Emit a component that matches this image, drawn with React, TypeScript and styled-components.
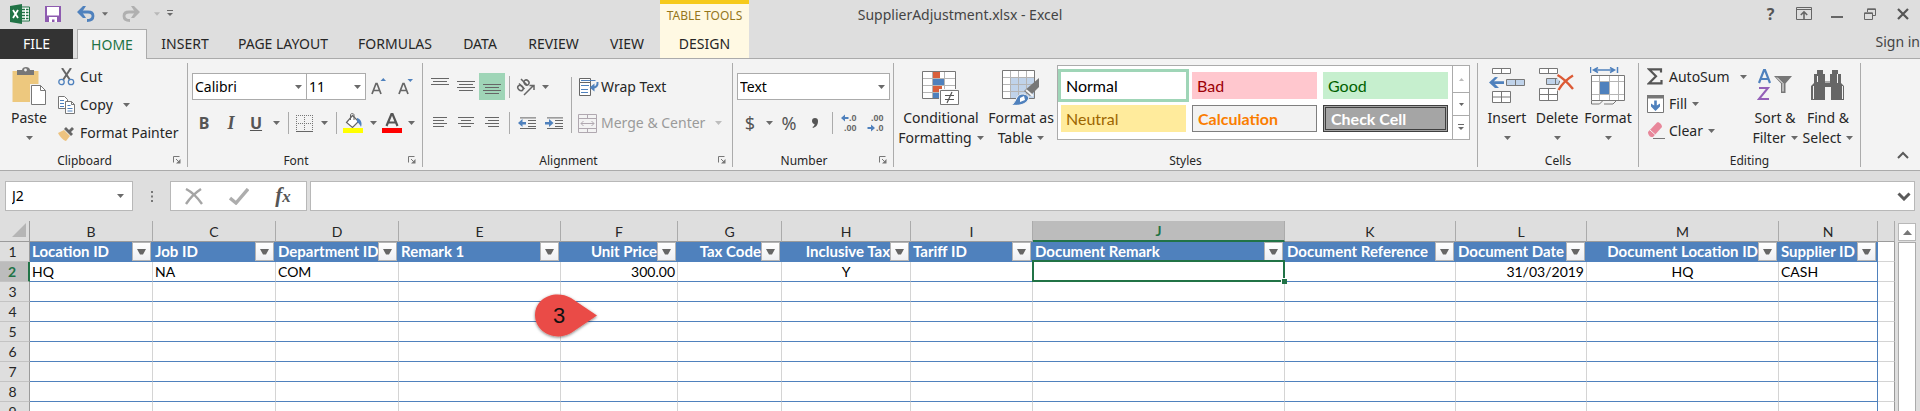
import React from "react";
import styled, { createGlobalStyle, css } from "styled-components";

const ui = `"Noto Sans", "Open Sans", sans-serif`;
const cellFont = `Lato, "Open Sans", sans-serif`;
const line = "#ababab";
const chrome = "#dedede";
const green = "#217346";
const blue = "#4f81bd";

const GlobalStyle = createGlobalStyle`
  *, *::before, *::after { box-sizing: border-box; }
  body { margin: 0; background: ${chrome}; overflow: hidden; }
  button, input, select { font: inherit; color: inherit; }
`;

const Page = styled.div`
  display: flex;
  flex-direction: column;
  height: 100vh;
  font: 14px/20px ${ui};
  color: #262626;
`;

const plain = css`
  border: 0;
  padding: 0;
  background: none;
  white-space: nowrap;
`;

/* Title bar */

const TitleBar = styled.header`
  display: grid;
  grid-template-columns: 1fr auto 1fr;
  height: 29px;
`;

const TitleStart = styled.div`
  display: flex;
`;

const QuickAccess = styled.div`
  display: flex;
  align-items: center;
  flex: 0 0 660px;
  padding: 0 0 3px 4px;
`;

const QuickButton = styled.button<{ $width: number }>`
  ${plain}
  display: flex;
  align-items: center;
  justify-content: center;
  width: ${(p) => p.$width}px;
  height: 24px;
`;

const ContextTitle = styled.div`
  flex: 0 0 89px;
  border-top: 4px solid #f6ca1a;
  background: #fff9e3;
  color: #94761b;
  font-size: 12px;
  line-height: 24px;
  text-align: center;
`;

const DocumentTitle = styled.h1`
  margin: 0;
  font-size: 14px;
  font-weight: 400;
  line-height: 30px;
  color: #444;
`;

const WindowControls = styled.div`
  display: flex;
  justify-content: flex-end;
  align-items: center;
  padding: 0 1px 3px 0;
`;

/* Tabs */

const TabStrip = styled.nav`
  display: flex;
  height: 30px;
  border-bottom: 1px solid ${line};
`;

const Tab = styled.button<{ $width: number; $kind?: "file" | "active" | "context" }>`
  ${plain}
  flex: 0 0 ${(p) => p.$width}px;
  height: 29px;
  line-height: 30px;
  ${(p) =>
    p.$kind === "file" &&
    css`
      height: 30px;
      margin-right: 4px;
      background: #333;
      color: #fff;
    `}
  ${(p) =>
    p.$kind === "active" &&
    css`
      height: 30px;
      border: 1px solid ${line};
      border-bottom: 0;
      background: #f3f3f3;
      color: ${green};
      line-height: 28px;
    `}
  ${(p) => p.$kind === "context" && css`background: #fff9e3;`}
`;

const SignIn = styled.a`
  margin-left: auto;
  color: #444;
  line-height: 26px;
  text-decoration: none;
`;

/* Ribbon */

const Ribbon = styled.section`
  display: flex;
  flex: none;
  padding: 4px 0 3px;
  border-bottom: 1px solid ${line};
  background: #f3f3f3;
`;

const GroupBox = styled.section<{ $width: number }>`
  flex: 0 0 ${(p) => p.$width}px;
  border-right: 1px solid ${line};
`;

const GroupBody = styled.div<{ $pad: number }>`
  display: flex;
  height: 90px;
  padding-left: ${(p) => p.$pad}px;
`;

const GroupFoot = styled.div`
  display: flex;
  height: 14px;
`;

const GroupName = styled.h2`
  flex: 1;
  margin: 0;
  font-size: 12px;
  font-weight: 400;
  line-height: 15px;
  text-align: center;
`;

const Launcher = styled.button`
  ${plain}
  display: flex;
  align-items: center;
  width: 18px;
  padding-left: 4px;
`;

const BigButton = styled.button<{ $width: number }>`
  ${plain}
  display: flex;
  flex-direction: column;
  align-items: center;
  width: ${(p) => p.$width}px;
  padding-top: 4px;
`;

const BigIcon = styled.span`
  height: 41px;
`;

const BigText = styled.span`
  display: flex;
  align-items: center;
  gap: 5px;
  height: 20px;
`;

const Stack = styled.div<{ $row: number; $pad: number; $width?: number }>`
  display: grid;
  grid-template-rows: repeat(3, ${(p) => p.$row}px);
  align-content: start;
  padding-left: ${(p) => p.$pad}px;
  ${(p) => p.$width && `width: ${p.$width}px;`}
`;

const SmallButton = styled.button<{ $iconWidth: number; $gap?: number; $muted?: boolean }>`
  ${plain}
  display: flex;
  align-items: center;
  gap: ${(p) => p.$gap ?? 5}px;
  color: ${(p) => (p.$muted ? "#9a9a9a" : "inherit")};
  & > span:first-child {
    display: flex;
    flex: 0 0 ${(p) => p.$iconWidth}px;
  }
  & > span:nth-child(2) {
    margin-left: -${(p) => p.$gap ?? 5}px;
  }
`;

const Rows = styled.div`
  display: grid;
  grid-template-rows: 27px 28px;
  align-content: start;
  gap: 9px;
  padding-top: 10px;
`;

const Row = styled.div<{ $pad?: number }>`
  display: flex;
  align-items: center;
  padding-left: ${(p) => p.$pad ?? 0}px;
`;

const Tool = styled.button<{ $width: number; $on?: boolean }>`
  ${plain}
  display: flex;
  align-items: center;
  justify-content: center;
  width: ${(p) => p.$width}px;
  height: 27px;
  background: ${(p) => (p.$on ? "#9fd5b7" : "none")};
`;

const Letter = styled.span<{ $look: "bold" | "italic" | "underline" | "symbol" }>`
  color: #555;
  font-size: 16px;
  font-weight: ${(p) => (p.$look === "symbol" ? 400 : 700)};
  ${(p) => p.$look === "italic" && `font-family: "Liberation Serif", serif; font-style: italic; font-size: 18px;`}
  ${(p) => p.$look === "underline" && `text-decoration: underline;`}
  ${(p) => p.$look === "symbol" && `font-size: 18px;`}
`;

const Divider = styled.span<{ $width?: number; $tall?: boolean }>`
  display: flex;
  flex: 0 0 ${(p) => p.$width ?? 8}px;
  justify-content: center;
  height: ${(p) => (p.$tall ? 56 : 22)}px;
  margin-top: ${(p) => (p.$tall ? 14 : 0)}px;
  &::before {
    content: "";
    width: 1px;
    background: ${line};
  }
`;

const SelectBox = styled.label<{ $width: number }>`
  display: grid;
  align-items: center;
  width: ${(p) => p.$width}px;
  & + & { margin-left: -1px; }
  & > * { grid-area: 1 / 1; }
  & > svg {
    justify-self: end;
    margin-right: 5px;
    pointer-events: none;
  }
`;

const Select = styled.select`
  appearance: none;
  width: 100%;
  height: 27px;
  padding: 0 2px;
  border: 1px solid ${line};
  border-radius: 0;
  background: #fff;
  color: #000;
`;

const AlignLeftBlock = styled.div`
  flex: 0 0 144px;
`;

/* Cell style gallery */

const Gallery = styled.div`
  display: flex;
  width: 413px;
  height: 75px;
  margin-top: 2px;
  border: 1px solid ${line};
  background: #fff;
`;

const Swatches = styled.div`
  display: grid;
  grid-template-columns: repeat(3, 125px);
  grid-auto-rows: 27px;
  gap: 6px;
  flex: 1;
  padding: 6px 3px;
`;

const Swatch = styled.button<{ $bg: string; $ink: string; $edge?: string; $bold?: boolean; $on?: boolean }>`
  ${plain}
  padding-left: 5px;
  border: ${(p) => p.$edge ?? "0"};
  background: ${(p) => p.$bg};
  box-shadow: ${(p) => (p.$on ? "0 0 0 3px #9fd5b7" : "none")};
  color: ${(p) => p.$ink};
  font: ${(p) => (p.$bold ? 700 : 400)} 16px/20px ${cellFont};
  text-align: left;
`;

const GalleryScroll = styled.div`
  display: grid;
  grid-template-rows: 26px 23px 24px;
  width: 17px;
  border-left: 1px solid ${line};
`;

const GalleryButton = styled.button`
  ${plain}
  display: flex;
  align-items: center;
  justify-content: center;
  & + & { border-top: 1px solid ${line}; }
`;

const RibbonTail = styled.div`
  display: flex;
  flex: 1;
  align-items: flex-end;
  justify-content: flex-end;
  padding: 0 10px 0 0;
`;

/* Formula bar */

const FormulaBar = styled.section`
  display: flex;
  flex: none;
  height: 50px;
  padding: 10px 5px 10px;
`;

const Field = styled.div<{ $width?: number }>`
  display: flex;
  align-items: center;
  flex: ${(p) => (p.$width ? `0 0 ${p.$width}px` : "1")};
  min-width: 0;
  height: 30px;
  border: 1px solid #b8b8b8;
  background: #fff;
`;

const FieldInput = styled.input`
  flex: 1;
  width: 0;
  min-width: 0;
  padding: 0 6px;
  border: 0;
  outline: 0;
  background: none;
  color: #000;
`;

const Grip = styled.span`
  display: flex;
  flex: 0 0 37px;
  align-items: center;
  justify-content: center;
`;

const FieldGap = styled.span`
  flex: 0 0 3px;
`;

/* Sheet */

const Sheet = styled.main`
  position: relative;
  display: flex;
  flex: 1;
  min-height: 0;
  overflow: hidden;
`;

const GridArea = styled.div`
  flex: 1;
  min-width: 0;
`;

const GridTable = styled.table`
  width: 100%;
  table-layout: fixed;
  border-collapse: separate;
  border-spacing: 0;
  color: #000;
  font: 14px/19px ${cellFont};
`;

const Corner = styled.td`
  height: 21px;
  padding: 0 3px 3px 0;
  border-right: 1px solid #9b9b9b;
  border-bottom: 1px solid #9b9b9b;
  & > svg { display: block; margin-left: auto; }
`;

const ColHead = styled.th<{ $on?: boolean }>`
  height: 21px;
  padding: 0;
  border-right: 1px solid ${line};
  border-bottom: ${(p) => (p.$on ? `2px solid ${green}` : "1px solid #9b9b9b")};
  background: ${(p) => (p.$on ? "#bcbcbc" : chrome)};
  color: ${(p) => (p.$on ? green : "#262626")};
  font-weight: ${(p) => (p.$on ? 700 : 400)};
`;

const RowHead = styled.th<{ $on?: boolean }>`
  height: 20px;
  padding: 0 4px 0 0;
  border-right: ${(p) => (p.$on ? `2px solid ${green}` : "1px solid #9b9b9b")};
  border-bottom: 1px solid #c3c3c3;
  background: ${(p) => (p.$on ? "#bcbcbc" : chrome)};
  color: ${(p) => (p.$on ? green : "#262626")};
  font-weight: ${(p) => (p.$on ? 700 : 400)};
`;

const FieldCell = styled.td`
  height: 20px;
  padding: 0;
  border-bottom: 1px solid ${blue};
  background: ${blue};
  color: #fff;
  font-size: 15px;
  font-weight: 700;
`;

const FieldContent = styled.div<{ $align: Align }>`
  display: flex;
  height: 19px;
  & > span {
    flex: 1;
    min-width: 0;
    padding-left: 2px;
    text-align: ${(p) => (p.$align === "left" ? "left" : "right")};
    white-space: nowrap;
  }
`;

const FilterButton = styled.button`
  ${plain}
  display: flex;
  flex: 0 0 19px;
  align-items: center;
  justify-content: center;
  height: 19px;
  margin-right: 2px;
  border: 1px solid #b4b4b4;
  background: linear-gradient(#fff, #eeeff2);
`;

const Cell = styled.td<{ $align: Align; $last?: boolean; $outside?: boolean }>`
  position: relative;
  height: 20px;
  padding: 0 2px;
  border-right: 1px solid ${(p) => (p.$outside ? "#9b9b9b" : p.$last ? blue : "#d4d4d4")};
  border-bottom: 1px solid ${(p) => (p.$outside ? "#d4d4d4" : blue)};
  background: #fff;
  text-align: ${(p) => p.$align};
  white-space: nowrap;
`;

const Selection = styled.span`
  position: absolute;
  z-index: 1;
  inset: -2px -1px -1px -1px;
  border: 2px solid ${green};
  &::after {
    content: "";
    position: absolute;
    right: -4px;
    bottom: -4px;
    width: 6px;
    height: 6px;
    border: solid #fff;
    border-width: 1px 0 0 1px;
    background: ${green};
  }
`;

const Callout = styled.svg`
  position: absolute;
  z-index: 2;
  top: 72px;
  left: 532px;
`;

const ScrollBar = styled.div`
  display: flex;
  flex-direction: column;
  flex: 0 0 25px;
  gap: 1px;
  padding: 2px 4px 0 3px;
`;

const ScrollButton = styled.button`
  ${plain}
  display: flex;
  align-items: center;
  justify-content: center;
  height: 18px;
  border: 1px solid #b8b8b8;
  background: #fff;
`;

const ScrollThumb = styled.div`
  flex: 1;
  border: 1px solid ${line};
  border-bottom: 0;
  background: #fff;
`;

/* Icons */

type IconProps = { w: number; h: number; children: React.ReactNode };
const Icon = ({ w, h, children }: IconProps) => (
  <svg width={w} height={h} viewBox={`0 0 ${w} ${h}`} fill="none" aria-hidden="true">
    {children}
  </svg>
);

const Caret = ({ color = "#6a6a6a" }: { color?: string }) => (
  <Icon w={7} h={4}>
    <path d="M0 0h7L3.500 4z" fill={color} />
  </Icon>
);

const ExcelLogo = () => (
  <Icon w={20} h={20}>
    <path d="M11 3h8.500v14H11z" fill="#fff" stroke="#217346" />
    <path d="M12 5.500h3M12 8.500h3M12 11.500h3M12 14.500h3M16 5.500h2.500M16 8.500h2.500M16 11.500h2.500M16 14.500h2.500" stroke="#217346" strokeWidth="1.600" />
    <path d="M0 2l12-2v20L0 18z" fill="#217346" />
    <path d="M3 6l5 8M8 6l-5 8" stroke="#fff" strokeWidth="1.800" />
  </Icon>
);

const SaveIcon = () => (
  <Icon w={16} h={16}>
    <path d="M0 0h16v16H0z" fill="#8e5bb0" />
    <path d="M2 1h12v8.500H2zM4 11h8v5H9.500v-2.500H7V16H4z" fill="#fff" />
  </Icon>
);

const UndoIcon = ({ color, flip }: { color: string; flip?: boolean }) => (
  <Icon w={18} h={16}>
    <g transform={flip ? "translate(18 0) scale(-1 1)" : undefined}>
      <path d="M2 6h9c3 0 5 1.500 5 4s-2 4.500-6 4.500" stroke={color} strokeWidth="2.800" />
      <path d="M0 6l6-6h3L5 6l4 6H6z" fill={color} />
    </g>
  </Icon>
);

const CustomizeIcon = () => (
  <Icon w={6} h={7}>
    <path d="M0 .5h6" stroke="#6a6a6a" />
    <path d="M0 3h6L3 6z" fill="#6a6a6a" />
  </Icon>
);

const PasteIcon = () => (
  <Icon w={36} h={39}>
    <path d="M1.500 4h26v31h-26z" fill="#edc87e" />
    <path d="M6 8V3h5c0-4 8-4 8 0h4v5z" fill="#777" />
    <circle cx="14.500" cy="3" r="1.400" fill="#f3f3f3" />
    <path d="M19 17h12l5 6v16H19z" fill="#f3f3f3" />
    <path d="M20.500 18.500h9l5 5v14h-14z" fill="#fff" stroke="#777" />
    <path d="M29.500 18.500v5h5" stroke="#777" />
  </Icon>
);

const CutIcon = () => (
  <Icon w={17} h={18}>
    <path d="M4 0l8 12M13 0L5 12" stroke="#666" strokeWidth="2" />
    <circle cx="3.500" cy="14" r="2.700" stroke={blue} strokeWidth="1.300" />
    <circle cx="13" cy="14" r="2.700" stroke={blue} strokeWidth="1.300" />
  </Icon>
);

const CopyIcon = () => (
  <Icon w={17} h={18}>
    <path d="M.5.5h6l3 3v9h-9z" fill="#fff" stroke="#777" />
    <path d="M2 4.500h4M2 7.500h4M2 10.500h4" stroke={blue} />
    <path d="M7.500 5.500h6l3 3v9h-9z" fill="#fff" stroke="#777" />
    <path d="M13.500 5.500v3h3" stroke="#777" />
    <path d="M9.500 9.500h3M9.500 12.500h5M9.500 15h5" stroke={blue} />
  </Icon>
);

const PainterIcon = () => (
  <Icon w={17} h={15}>
    <path d="M0 7l6-3 6 6-4 5c-2 0-6-4-8-8z" fill="#edc380" />
    <path d="M6 3l2-2 7 7-2 2z" fill="#666" />
    <path d="M10 5l4-4 2 2-4 4z" fill="#666" />
  </Icon>
);

const SizeIcon = ({ up }: { up?: boolean }) => (
  <Icon w={16} h={17}>
    <path d="M1 16l4-10.500h1L10 16M2.500 12.500h6" stroke="#666" strokeWidth="1.700" />
    <path d={up ? "M9.500 3h5.500L12.300 0z" : "M9.500 1h5.500L12.300 4z"} fill={blue} />
  </Icon>
);

const BorderIcon = () => (
  <Icon w={17} h={17}>
    <path d="M.5 0v16M8.500 0v16M16.500 0v16M0 .5h17M0 8.500h17" stroke="#777" strokeDasharray="1 1" />
    <path d="M0 16.500h17" stroke="#666" />
  </Icon>
);

const FillColorIcon = () => (
  <Icon w={20} h={20}>
    <path d="M3.500 9.500l6-7 6 6-6 6z" fill="#fff" stroke="#666" strokeWidth="1.200" />
    <path d="M7.500 7V2c0-2 3.500-2 3.500 0v5" stroke="#666" />
    <path d="M14 5c4 1 5.500 5 4 9-1-2-2-4-4-5z" fill={blue} />
    <path d="M0 15h20v5H0z" fill="#ff0" />
  </Icon>
);

const FontColorIcon = () => (
  <Icon w={20} h={20}>
    <path d="M4.500 13L9.500 1h1l5 12M6.500 9.500h7" stroke="#555" strokeWidth="2.200" />
    <path d="M0 15h20v5H0z" fill="red" />
  </Icon>
);

const Lines = ({ rows }: { rows: [number, number][] }) => (
  <Icon w={18} h={rows.length * 3 + 2}>
    {rows.map(([x, w], i) => (
      <path key={i} d={`M${x} ${i * 3 + 1.5}h${w}`} stroke="#666" />
    ))}
  </Icon>
);

const OrientIcon = () => (
  <Icon w={20} h={18}>
    <g stroke="#666" strokeWidth="1.500">
      <ellipse cx="4.500" cy="10" rx="2.300" ry="3" transform="rotate(-45 4.500 10)" />
      <path d="M3 5.500l5.500 5.500M5 1l6 6" />
      <ellipse cx="10.500" cy="4.500" rx="2.300" ry="2.700" transform="rotate(-45 10.500 4.500)" />
      <path d="M8 17L17.500 7.500M13.500 7.500h4.500v4.500" />
    </g>
  </Icon>
);

const IndentIcon = ({ back }: { back?: boolean }) => (
  <Icon w={19} h={12}>
    <path d="M2 .9h16M10 3.500h8M10 6.500h8M10 9.500h8M2 11.500h16" stroke="#666" />
    {back ? (
      <path d="M0 6l4.500-4v3H8v2.400H4.500V10z" fill={blue} />
    ) : (
      <path d="M8.500 6L4 2v3H0v2.400h4V10z" fill={blue} />
    )}
  </Icon>
);

const WrapIcon = () => (
  <Icon w={20} h={18}>
    <path d="M.5.500h11v4h-11zM.5 4.500h11v13h-11z" fill="#fff" stroke="#666" />
    <path d="M2 2.500h14.500M2 7.500h8M2 11.500h7M2 14.500h7" stroke={blue} />
    <path d="M18.500 4c.5 4-1.500 5.500-5 5.500" stroke={blue} strokeWidth="2" />
    <path d="M15.500 5.500v8l-5-4z" fill={blue} />
  </Icon>
);

const MergeIcon = () => (
  <Icon w={19} h={19}>
    <path d="M.5.500h18v18H.5zM.5 4.500h18M.5 14.500h18M9.500.5v4M9.500 14.500v4" stroke="#b0a8b0" />
    <path d="M3 9.500h13M5.500 7L3 9.500 5.500 12M13.500 7l2.500 2.500-2.500 2.500" stroke="#b0a8b0" />
  </Icon>
);

const DecimalText = styled.text`
  font: 700 9px "Liberation Sans", Arial, sans-serif;
  fill: #666;
`;

const DecimalIcon = ({ more }: { more?: boolean }) => (
  <Icon w={20} h={22}>
    <DecimalText x={more ? 9 : 5} y="9">{more ? ".0" : ".00"}</DecimalText>
    <DecimalText x={more ? 4 : 10} y="19">{more ? ".00" : ".0"}</DecimalText>
    {more ? (
      <path d="M1 6l4-3.500v2.500h3.500v2H5v2.500z" fill={blue} />
    ) : (
      <path d="M9 16l-4-3.500v2.500H1.500v2H5v2.500z" fill={blue} />
    )}
  </Icon>
);

const ConditionalIcon = () => (
  <Icon w={38} h={38}>
    <g transform="translate(0 4)">
      <path d="M.5.5h33v27H.5z" fill="#fff" />
      <path d="M11 1h7v6h-7zM11 15h9v6h-9z" fill="#d9603c" />
      <path d="M11 8h11v6H11zM11 22h6v5h-6z" fill={blue} />
      <path d="M10.500 1v27M22.500 1v27M1 7.500h33M1 14.500h33M1 21.500h33" stroke="#b5b5b5" />
      <path d="M.5.5h33v27H.5z" stroke="#777" />
      <path d="M17 18h21v16H17z" fill="#f3f3f3" />
      <path d="M18.500 19.500h18v14h-18z" fill="#fff" stroke="#777" />
      <path d="M23 24.500h9M23 28.500h9M30 21l-5 11" stroke="#555" strokeWidth="1.200" />
    </g>
  </Icon>
);

const FormatTableIcon = () => (
  <Icon w={38} h={38}>
    <g transform="translate(0 3)">
      <path d="M.5.500h32v28H.5z" fill="#fff" />
      <path d="M9 8h24v20H9z" fill="#c0d3ea" />
      <path d="M8.500 1v28M16.500 1v28M24.500 1v28M1 7.500h32M1 14.500h32M1 21.500h32" stroke="#b5b5b5" />
      <path d="M.5.500h32v28H.5z" stroke="#777" />
      <path d="M37 8v9l-9 9-6-5z" fill="#777" />
      <path d="M24 20l7 6" stroke="#f3f3f3" strokeWidth="2" />
      <path d="M9 35c5-1 5-11 11-11 5 0 8 3 6 6-3 5-10 6-17 5z" fill={blue} stroke="#f3f3f3" />
      <path d="M18 28l4-2 1 4-5 2z" fill="#fff" />
    </g>
  </Icon>
);

const InsertIcon = () => (
  <Icon w={36} h={37}>
    <g stroke="#777">
      <path d="M3.500 1.500h18v5h-18zM12.500 1.500v5M3.500 24.500h18v11h-18zM12.500 24.500v11M3.500 30h18" fill="#fff" />
      <path d="M17.500 12.500h18v6h-18zM26.500 12.500v6" fill="#c0d3ea" />
    </g>
    <path d="M15 14.300H5l4-4-3-.300L0 15.500 6 21h4l-4-4h9z" fill={blue} />
  </Icon>
);

const DeleteIcon = () => (
  <Icon w={36} h={37}>
    <g stroke="#777">
      <path d="M.5 1.500h18v5H.5zM9.500 1.500v5M.5 21.500h18v12H.5zM9.500 21.500v12M.5 27.500h18" fill="#fff" />
      <path d="M7.500 11.500h14l-2 6h-12zM16.500 11.500v6" fill="#c0d3ea" />
    </g>
    <path d="M18 8l16 15M34 8L18 23" stroke="#f3f3f3" strokeWidth="5" />
    <path d="M18.500 8C24 11 29 16 34 22M34 8.500C28 12 23 17 19.500 23" stroke="#dc5a35" strokeWidth="2.400" />
  </Icon>
);

const FormatIcon = () => (
  <Icon w={36} h={38}>
    <path d="M.5 0v6M27.500 0v6M4 3h20M8 .5L3.500 3 8 5.500M20 .5L24.500 3 20 5.500" stroke={blue} strokeWidth="1.500" />
    <path d="M1.500 8.500h33v25h-33z" fill="#fff" />
    <path d="M9.500 9v24M19.500 9v24M28.500 9v24M1 14.500h34M1 27.500h34" stroke="#b5b5b5" />
    <path d="M1.500 8.500h33v25h-33zM1.500 34v3h8l3-3M14 37h9l3-3" stroke="#777" />
    <path d="M10 15h9v12h-9z" fill={blue} />
  </Icon>
);

const SumIcon = () => (
  <Icon w={16} h={17}>
    <path d="M14 4.500V1.300H2l7 7-7 7h12.500V12" stroke="#555" strokeWidth="2.200" />
  </Icon>
);

const FillIcon = () => (
  <Icon w={17} h={18}>
    <path d="M.5.500h16v17H.5z" fill="#fff" stroke="#777" />
    <path d="M0 0h17v3.500H0z" fill="#777" />
    <path d="M7.200 5.500h2.600v5l3.200-2v3L8.500 16 4 11.500v-3l3.200 2z" fill={blue} />
  </Icon>
);

const EraserIcon = () => (
  <Icon w={18} h={17}>
    <path d="M1 10L10 .5c2-1 5 2 5 4.500L6 15c-3 .500-5-2-5-5z" fill="#e8879a" />
    <path d="M3 8l5.500 5" stroke="#f3f3f3" />
    <path d="M6 16.500h12" stroke="#777" />
  </Icon>
);

const SortIcon = () => (
  <Icon w={36} h={38}>
    <path d="M2 16L7 3h1l5 13M4 12h7" stroke={blue} strokeWidth="2.200" />
    <path d="M2 21h9L2 32h10" stroke="#9460b8" strokeWidth="2" />
    <path d="M17 9h18l-6.500 7.500V26h-4.500v-9.500z" fill="#777" />
    <path d="M20 10.500l6 6v8" stroke="#fff" />
  </Icon>
);

const FindIcon = () => (
  <Icon w={36} h={38}>
    <path d="M7 3h6v4h2v7h5V7h2V3h6v4h3v9l3 3v14H21V20h-6v13H1V19l3-3V7h3z" fill="#666" />
    <path d="M15 15h5" stroke="#f3f3f3" />
    <path d="M3.500 19v13M7.500 9v6M27.500 7v9M32.500 19v13" stroke="#f3f3f3" />
  </Icon>
);

const LaunchIcon = () => (
  <Icon w={8} h={8}>
    <path d="M.5 6.500v-6h6M3 3l4 4" stroke="#777" />
    <path d="M7.500 3v4.500H3z" fill="#777" />
  </Icon>
);

const CancelIcon = () => (
  <Icon w={18} h={17}>
    <path d="M1 1c6 3 11 8 16 15M16 1C10 5 5 10 1 16" stroke="#a5a5a5" strokeWidth="2.400" />
  </Icon>
);

const EnterIcon = () => (
  <Icon w={20} h={17}>
    <path d="M1 10l6 5L19 1" stroke="#adadad" strokeWidth="3.400" />
  </Icon>
);

const FunctionMark = styled.span`
  color: #555;
  font: italic 700 21px/20px "Liberation Serif", serif;
  & > small { font-size: 17px; }
`;

const Chevron = ({ up, w }: { up?: boolean; w: number }) => (
  <Icon w={14} h={9}>
    <path d={up ? "M2 7l5-5 5 5" : "M1.500 1.500L7 7l5.500-5.500"} stroke="#5a5a5a" strokeWidth={w} />
  </Icon>
);

const RibbonOptionsIcon = () => (
  <Icon w={16} h={13}>
    <path d="M.5.500h15v12H.5zM0 2.500h16" stroke="#666" />
    <path d="M8 12V5M4.800 8L8 4.800 11.200 8" stroke="#666" strokeWidth="1.600" />
  </Icon>
);

const MinimizeIcon = () => (
  <Icon w={12} h={8}>
    <path d="M0 7h12" stroke="#666" strokeWidth="2" />
  </Icon>
);

const RestoreIcon = () => (
  <Icon w={12} h={12}>
    <path d="M3.500 4V.8h8v6.700H9M3 1.500h9M.5 4.800h8v6.700h-8zM0 5.500h9" stroke="#666" />
  </Icon>
);

const CloseIcon = () => (
  <Icon w={12} h={12}>
    <path d="M1 1l10 10M11 1L1 11" stroke="#555" strokeWidth="2.200" />
  </Icon>
);

/* Composite parts */

const Group = ({ name, width, pad, launcher, children }: { name: string; width: number; pad: number; launcher?: boolean; children: React.ReactNode }) => (
  <GroupBox $width={width} aria-label={name}>
    <GroupBody $pad={pad}>{children}</GroupBody>
    <GroupFoot>
      <GroupName>{name}</GroupName>
      {launcher && (
        <Launcher aria-label={`${name} settings`}>
          <LaunchIcon />
        </Launcher>
      )}
    </GroupFoot>
  </GroupBox>
);

const Big = ({ width, icon, lines }: { width: number; icon: React.ReactNode; lines: [string, string?] }) => (
  <BigButton $width={width}>
    <BigIcon>{icon}</BigIcon>
    <BigText>{lines[0]}</BigText>
    <BigText>
      {lines[1]}
      <Caret />
    </BigText>
  </BigButton>
);

const CaretTool = ({ width, label }: { width: number; label: string }) => (
  <Tool $width={width} aria-label={label}>
    <Caret />
  </Tool>
);

const Dropdown = ({ width, label, value }: { width: number; label: string; value: string }) => (
  <SelectBox $width={width}>
    <Select aria-label={label} defaultValue={value}>
      <option>{value}</option>
    </Select>
    <Caret />
  </SelectBox>
);

/* Sheet data */

type Align = "left" | "center" | "right";
type Column = { id: string; width?: number; field?: string; head?: Align; value?: string; align?: Align };

const columns: Column[] = [
  { id: "B", width: 123, field: "Location ID", value: "HQ" },
  { id: "C", width: 123, field: "Job ID", value: "NA" },
  { id: "D", width: 123, field: "Department ID", value: "COM" },
  { id: "E", width: 162, field: "Remark 1" },
  { id: "F", width: 117, field: "Unit Price", head: "right", value: "300.00", align: "right" },
  { id: "G", width: 104, field: "Tax Code", head: "right" },
  { id: "H", width: 129, field: "Inclusive Tax", head: "right", value: "Y", align: "center" },
  { id: "I", width: 122, field: "Tariff ID" },
  { id: "J", width: 252, field: "Document Remark" },
  { id: "K", width: 171, field: "Document Reference" },
  { id: "L", width: 131, field: "Document Date", value: "31/03/2019", align: "right" },
  { id: "M", width: 192, field: "Document Location ID", head: "right", value: "HQ", align: "center" },
  { id: "N", width: 99, field: "Supplier ID", value: "CASH" },
  { id: "" },
];

const tabs: [string, number][] = [
  ["INSERT", 76],
  ["PAGE LAYOUT", 120],
  ["FORMULAS", 104],
  ["DATA", 66],
  ["REVIEW", 81],
  ["VIEW", 66],
];

export default function App() {
  return (
    <Page>
      <GlobalStyle />
      <TitleBar>
        <TitleStart>
          <QuickAccess>
            <QuickButton $width={32} aria-label="Excel"><ExcelLogo /></QuickButton>
            <QuickButton $width={34} aria-label="Save"><SaveIcon /></QuickButton>
            <QuickButton $width={32} aria-label="Undo"><UndoIcon color={blue} /></QuickButton>
            <QuickButton $width={6} aria-label="Undo history"><Caret /></QuickButton>
            <QuickButton $width={46} aria-label="Redo"><UndoIcon color="#b0b0b0" flip /></QuickButton>
            <QuickButton $width={6} aria-label="Redo history"><Caret color="#b8b8b8" /></QuickButton>
            <QuickButton $width={20} aria-label="Customize toolbar"><CustomizeIcon /></QuickButton>
          </QuickAccess>
          <ContextTitle>TABLE TOOLS</ContextTitle>
        </TitleStart>
        <DocumentTitle>SupplierAdjustment.xlsx - Excel</DocumentTitle>
        <WindowControls>
          <QuickButton $width={33} aria-label="Help"><Letter $look="bold">?</Letter></QuickButton>
          <QuickButton $width={33} aria-label="Ribbon options"><RibbonOptionsIcon /></QuickButton>
          <QuickButton $width={33} aria-label="Minimize"><MinimizeIcon /></QuickButton>
          <QuickButton $width={33} aria-label="Restore"><RestoreIcon /></QuickButton>
          <QuickButton $width={33} aria-label="Close"><CloseIcon /></QuickButton>
        </WindowControls>
      </TitleBar>

      <TabStrip>
        <Tab $width={73} $kind="file">FILE</Tab>
        <Tab $width={70} $kind="active">HOME</Tab>
        {tabs.map(([name, width]) => (
          <Tab key={name} $width={width}>{name}</Tab>
        ))}
        <Tab $width={89} $kind="context">DESIGN</Tab>
        <SignIn href="#sign-in">Sign in</SignIn>
      </TabStrip>

      <Ribbon>
        <Group name="Clipboard" width={188} pad={3} launcher>
          <Big width={52} icon={<PasteIcon />} lines={["Paste"]} />
          <Stack $row={28} $pad={3}>
            <SmallButton $iconWidth={22}><span><CutIcon /></span><span>Cut</span></SmallButton>
            <SmallButton $iconWidth={22} $gap={10}><span><CopyIcon /></span><span>Copy</span><Caret /></SmallButton>
            <SmallButton $iconWidth={22}><span><PainterIcon /></span><span>Format Painter</span></SmallButton>
          </Stack>
        </Group>

        <Group name="Font" width={235} pad={0} launcher>
          <Rows>
            <Row $pad={4}>
              <Dropdown width={115} label="Font" value="Calibri" />
              <Dropdown width={60} label="Font size" value="11" />
              <Tool $width={26} aria-label="Increase font size"><SizeIcon up /></Tool>
              <Tool $width={28} aria-label="Decrease font size"><SizeIcon /></Tool>
            </Row>
            <Row $pad={2}>
              <Tool $width={28} aria-label="Bold"><Letter $look="bold">B</Letter></Tool>
              <Tool $width={26} aria-label="Italic"><Letter $look="italic">I</Letter></Tool>
              <Tool $width={24} aria-label="Underline"><Letter $look="underline">U</Letter></Tool>
              <CaretTool width={16} label="Underline styles" />
              <Divider />
              <Tool $width={24} aria-label="Borders"><BorderIcon /></Tool>
              <CaretTool width={16} label="Border styles" />
              <Divider />
              <Tool $width={26} aria-label="Fill color"><FillColorIcon /></Tool>
              <CaretTool width={14} label="Fill colors" />
              <Tool $width={24} aria-label="Font color"><FontColorIcon /></Tool>
              <CaretTool width={14} label="Font colors" />
            </Row>
          </Rows>
        </Group>

        <Group name="Alignment" width={310} pad={0} launcher>
          <AlignLeftBlock>
            <Rows>
              <Row $pad={4}>
                <Tool $width={26} aria-label="Top align"><Lines rows={[[0, 18], [2, 14], [0, 18], [0, 0], [0, 0], [0, 0]]} /></Tool>
                <Tool $width={26} aria-label="Middle align"><Lines rows={[[0, 18], [2, 14], [0, 18], [2, 14]]} /></Tool>
                <Tool $width={26} $on aria-label="Bottom align"><Lines rows={[[0, 0], [0, 0], [0, 18], [2, 14], [0, 18], [2, 14]]} /></Tool>
                <Divider />
                <Tool $width={26} aria-label="Orientation"><OrientIcon /></Tool>
                <CaretTool width={12} label="Orientations" />
              </Row>
              <Row $pad={4}>
                <Tool $width={26} aria-label="Align left"><Lines rows={[[2, 14], [2, 11], [2, 14], [2, 11]]} /></Tool>
                <Tool $width={26} aria-label="Center"><Lines rows={[[1, 16], [4, 10], [1, 16], [4, 10]]} /></Tool>
                <Tool $width={26} aria-label="Align right"><Lines rows={[[2, 14], [5, 11], [2, 14], [5, 11]]} /></Tool>
                <Divider />
                <Tool $width={28} aria-label="Decrease indent"><IndentIcon back /></Tool>
                <Tool $width={26} aria-label="Increase indent"><IndentIcon /></Tool>
              </Row>
            </Rows>
          </AlignLeftBlock>
          <Divider $tall />
          <Rows>
            <Row $pad={4}>
              <SmallButton $iconWidth={22}><span><WrapIcon /></span><span>Wrap Text</span></SmallButton>
            </Row>
            <Row $pad={3}>
              <SmallButton $iconWidth={23} $gap={10} $muted><span><MergeIcon /></span><span>Merge &amp; Center</span><Caret color="#bdbdbd" /></SmallButton>
            </Row>
          </Rows>
        </Group>

        <Group name="Number" width={161} pad={4} launcher>
          <Rows>
            <Row>
              <Dropdown width={153} label="Number format" value="Text" />
            </Row>
            <Row>
              <Tool $width={26} aria-label="Currency"><Letter $look="symbol">$</Letter></Tool>
              <CaretTool width={12} label="Currencies" />
              <Tool $width={28} aria-label="Percent"><Letter $look="symbol">%</Letter></Tool>
              <Tool $width={24} aria-label="Comma style">
                <Icon w={6} h={10}><path d="M0 3a3 3 0 0 1 6 0c0 4-2 6-5 7l-.500-1c1.500-.700 2-1.500 2-3C1 6 0 4.500 0 3z" fill="#555" /></Icon>
              </Tool>
              <Divider $width={10} />
              <Tool $width={26} aria-label="Increase decimal"><DecimalIcon more /></Tool>
              <Tool $width={26} aria-label="Decrease decimal"><DecimalIcon /></Tool>
            </Row>
          </Rows>
        </Group>

        <Group name="Styles" width={584} pad={3}>
          <Big width={88} icon={<ConditionalIcon />} lines={["Conditional", "Formatting"]} />
          <Big width={72} icon={<FormatTableIcon />} lines={["Format as", "Table"]} />
          <Gallery>
            <Swatches>
              <Swatch $bg="#fff" $ink="#000" $on>Normal</Swatch>
              <Swatch $bg="#ffc7ce" $ink="#9c0006">Bad</Swatch>
              <Swatch $bg="#c6efce" $ink="#006100">Good</Swatch>
              <Swatch $bg="#ffeb9c" $ink="#9c6500">Neutral</Swatch>
              <Swatch $bg="#f2f2f2" $ink="#fa7d00" $edge="1px solid #7f7f7f" $bold>Calculation</Swatch>
              <Swatch $bg="#a5a5a5" $ink="#fff" $edge="3px double #3f3f3f" $bold>Check Cell</Swatch>
            </Swatches>
            <GalleryScroll>
              <GalleryButton aria-label="Previous styles"><Icon w={5} h={3}><path d="M0 3h5L2.500 0z" fill="#bbb" /></Icon></GalleryButton>
              <GalleryButton aria-label="Next styles"><Icon w={5} h={3}><path d="M0 0h5L2.500 3z" fill="#666" /></Icon></GalleryButton>
              <GalleryButton aria-label="All styles"><CustomizeIcon /></GalleryButton>
            </GalleryScroll>
          </Gallery>
        </Group>

        <Group name="Cells" width={161} pad={4}>
          <Big width={50} icon={<InsertIcon />} lines={["Insert"]} />
          <Big width={50} icon={<DeleteIcon />} lines={["Delete"]} />
          <Big width={52} icon={<FormatIcon />} lines={["Format"]} />
        </Group>

        <Group name="Editing" width={222} pad={0}>
          <Stack $row={27} $pad={8} $width={109}>
            <SmallButton $iconWidth={22} $gap={10}><span><SumIcon /></span><span>AutoSum</span><Caret /></SmallButton>
            <SmallButton $iconWidth={22}><span><FillIcon /></span><span>Fill</span><Caret /></SmallButton>
            <SmallButton $iconWidth={22}><span><EraserIcon /></span><span>Clear</span><Caret /></SmallButton>
          </Stack>
          <Big width={54} icon={<SortIcon />} lines={["Sort &", "Filter"]} />
          <Big width={52} icon={<FindIcon />} lines={["Find &", "Select"]} />
        </Group>

        <RibbonTail>
          <QuickButton $width={14} aria-label="Collapse ribbon"><Chevron up w={2} /></QuickButton>
        </RibbonTail>
      </Ribbon>

      <FormulaBar>
        <Field $width={128}>
          <FieldInput aria-label="Name box" defaultValue="J2" />
          <QuickButton $width={24} aria-label="Names"><Caret /></QuickButton>
        </Field>
        <Grip>
          <Icon w={2} h={11}><path d="M0 0h2v2H0zM0 4.500h2v2H0zM0 9h2v2H0z" fill="#777" /></Icon>
        </Grip>
        <Field $width={137}>
          <QuickButton $width={46} aria-label="Cancel"><CancelIcon /></QuickButton>
          <QuickButton $width={44} aria-label="Enter"><EnterIcon /></QuickButton>
          <QuickButton $width={44} aria-label="Insert function"><FunctionMark>f<small>x</small></FunctionMark></QuickButton>
        </Field>
        <FieldGap />
        <Field>
          <FieldInput aria-label="Formula" />
          <QuickButton $width={20} aria-label="Expand formula bar"><Chevron w={3} /></QuickButton>
        </Field>
      </FormulaBar>

      <Sheet>
        <GridArea>
          <GridTable>
            <colgroup>
              <col width={30} />
              {columns.map((c) => (
                <col key={c.id} width={c.width} />
              ))}
            </colgroup>
            <thead>
              <tr>
                <Corner>
                  <Icon w={14} h={14}><path d="M14 0v14H0z" fill="#b5b5b5" /></Icon>
                </Corner>
                {columns.map((c) => (
                  <ColHead key={c.id} scope="col" $on={c.id === "J"}>{c.id}</ColHead>
                ))}
              </tr>
            </thead>
            <tbody>
              <tr>
                <RowHead scope="row">1</RowHead>
                {columns.map((c) =>
                  c.field ? (
                    <FieldCell key={c.id}>
                      <FieldContent $align={c.head ?? "left"}>
                        <span>{c.field}</span>
                        <FilterButton aria-label={`Filter ${c.field}`}>
                          <Icon w={9} h={6}><path d="M0 0h9L6 5.500H3z" fill="#666" /></Icon>
                        </FilterButton>
                      </FieldContent>
                    </FieldCell>
                  ) : (
                    <Cell key={c.id} $align="left" $outside />
                  )
                )}
              </tr>
              {[2, 3, 4, 5, 6, 7, 8, 9].map((n) => (
                <tr key={n}>
                  <RowHead scope="row" $on={n === 2}>{n}</RowHead>
                  {columns.map((c) => (
                    <Cell key={c.id} $align={c.align ?? "left"} $last={c.id === "N"} $outside={!c.field}>
                      {n === 2 && c.value}
                      {n === 2 && c.id === "J" && <Selection />}
                    </Cell>
                  ))}
                </tr>
              ))}
            </tbody>
          </GridTable>
        </GridArea>
        <ScrollBar>
          <ScrollButton aria-label="Scroll up"><Icon w={9} h={5}><path d="M0 5h9L4.500 0z" fill="#777" /></Icon></ScrollButton>
          <ScrollThumb />
        </ScrollBar>
        <Callout width="70" height="50" viewBox="0 0 70 50">
          <defs>
            <filter id="calloutShadow" x="-20%" y="-20%" width="140%" height="150%">
              <feDropShadow dx="0" dy="1" stdDeviation="1.500" floodOpacity="0.5" />
            </filter>
          </defs>
          <path d="M65 22.500L39 40C23 49 3 39 3 22S23-4 39 5z" fill="#ea4c46" filter="url(#calloutShadow)" />
          <text x="27" y="30" textAnchor="middle" fontFamily="Liberation Sans, Arial, sans-serif" fontSize="22" fill="#111">3</text>
        </Callout>
      </Sheet>
    </Page>
  );
}
